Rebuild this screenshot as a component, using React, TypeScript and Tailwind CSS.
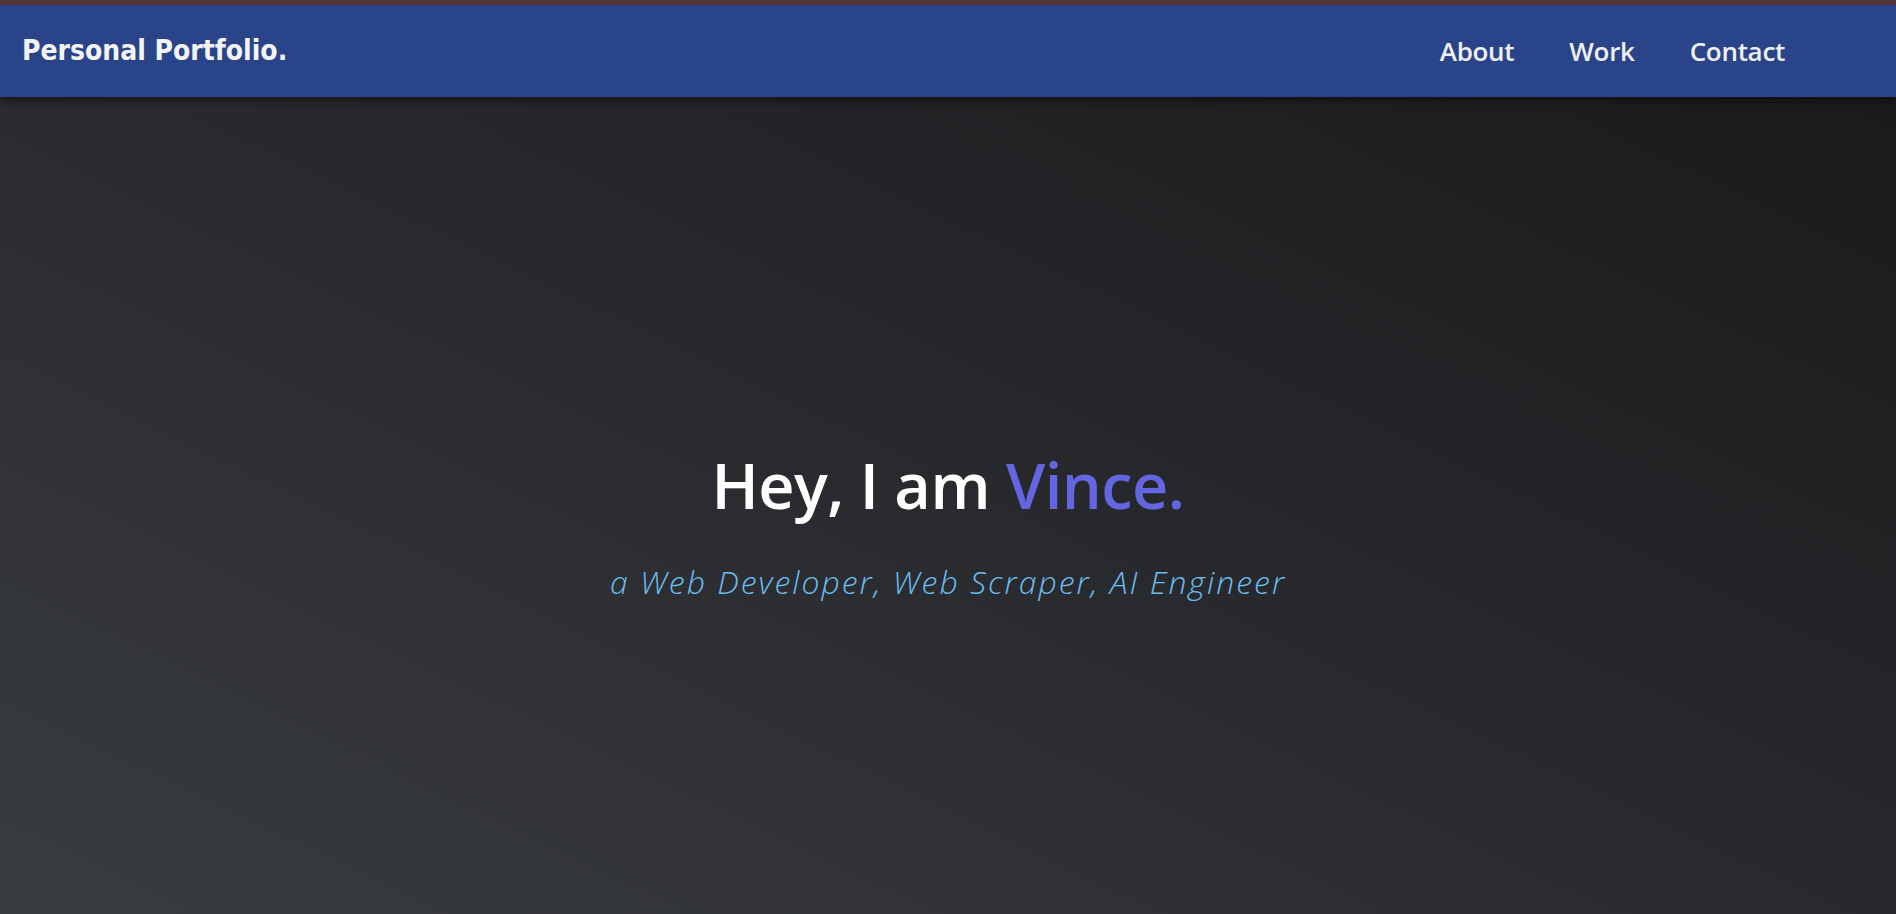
const navLinks = ["About", "Work", "Contact"]

export default function App() {
  return (
    <div className="flex h-[914px] w-full flex-col overflow-hidden bg-gradient-to-tr from-[#3a3d40] via-[#28292c] to-[#19191b]">
      {/* thin strip above the nav */}
      <div className="h-[5px] shrink-0 bg-[#55363b]" />

      <nav className="relative z-10 flex h-[92px] shrink-0 items-center justify-between bg-[#2a4489] pl-[22px] pr-[111px] shadow-[0_4px_8px_rgba(0,0,0,0.45)]">
        <a
          href="#"
          className="text-[28px] font-bold text-[#f4f4f8]"
          style={{ fontFamily: '"Comic Sans MS", "DejaVu Sans Condensed", "DejaVu Sans", sans-serif' }}
        >
          Personal Portfolio.
        </a>
        <ul className="flex items-center gap-[55px]" style={{ fontFamily: '"Open Sans", sans-serif' }}>
          {navLinks.map((link) => (
            <li key={link}>
              <a href="#" className="text-[26px] font-semibold tracking-[-0.3px] text-[#f0f0f6]">
                {link}
              </a>
            </li>
          ))}
        </ul>
      </nav>

      <main className="flex flex-1 flex-col items-center justify-center pt-[42px]" style={{ fontFamily: '"Open Sans", sans-serif' }}>
        <h1 className="text-[63px] font-semibold leading-[1.2] tracking-[-0.5px] text-white">
          Hey, I am <span className="text-[#6466e1]">Vince.</span>
        </h1>
        <p className="mt-[35px] text-[32px] font-light italic tracking-[2px] text-[#6bbcf0]">
          a Web Developer, Web Scraper, AI Engineer
        </p>
      </main>
    </div>
  )
}
